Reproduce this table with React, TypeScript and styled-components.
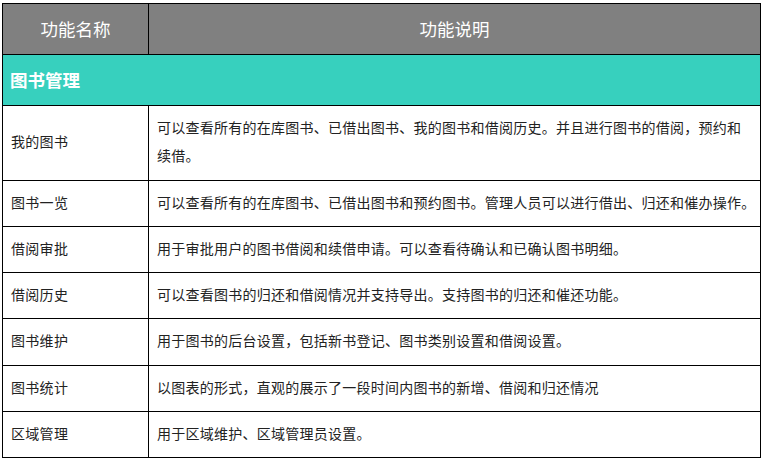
import React from "react";
import styled, { createGlobalStyle } from "styled-components";

const Global = createGlobalStyle`
  html, body { margin: 0; padding: 0; background: #ffffff; }
  body { font-family: "Noto Sans CJK SC", "Noto Sans", sans-serif; }
`;

const Page = styled.div`
  padding: 3px 0 0 2px;
`;

const Table = styled.table`
  width: 759px;
  border-collapse: collapse;
  table-layout: fixed;
  border: 1px solid #000;
`;

const HeadRow = styled.tr`
  height: 51px;
  background: #808080;
`;

const HeadCell = styled.th`
  border: 1px solid #000;
  color: #ffffff;
  font-weight: 400;
  font-size: 17.5px;
  text-align: center;
  vertical-align: middle;
  padding: 0 0 2px 0;
`;

const SectionRow = styled.tr`
  height: 51px;
  background: #37d0be;
`;

const SectionCell = styled.td`
  border: 1px solid #000;
  color: #ffffff;
  font-weight: 700;
  font-size: 17.5px;
  padding: 0 0 2px 7px;
  vertical-align: middle;
`;

const BodyRow = styled.tr<{ $h: number }>`
  height: ${(p) => p.$h}px;
`;

const NameCell = styled.td`
  border: 1px solid #000;
  color: #222;
  font-size: 14px;
  letter-spacing: 0.3px;
  padding: 0 0 4px 8px;
  vertical-align: middle;
`;

const DescCell = styled.td`
  border: 1px solid #000;
  color: #222;
  font-size: 14px;
  letter-spacing: 0.25px;
  line-height: 28px;
  padding: 6px 1px 10px 8px;
  vertical-align: middle;
`;

const Keep = styled.span`
  white-space: nowrap;
`;

const rows = [
  { name: "我的图书", desc: "可以查看所有的在库图书、已借出图书、我的图书和借阅历史。并且进行图书的借阅，预约和", tail: "续借。", h: 75 },
  { name: "图书一览", desc: "可以查看所有的在库图书、已借出图书和预约图书。管理人员可以进行借出、归还和催办操作。", tail: "", h: 46 },
  { name: "借阅审批", desc: "用于审批用户的图书借阅和续借申请。可以查看待确认和已确认图书明细。", tail: "", h: 46 },
  { name: "借阅历史", desc: "可以查看图书的归还和借阅情况并支持导出。支持图书的归还和催还功能。", tail: "", h: 46 },
  { name: "图书维护", desc: "用于图书的后台设置，包括新书登记、图书类别设置和借阅设置。", tail: "", h: 47 },
  { name: "图书统计", desc: "以图表的形式，直观的展示了一段时间内图书的新增、借阅和归还情况", tail: "", h: 46 },
  { name: "区域管理", desc: "用于区域维护、区域管理员设置。", tail: "", h: 46 },
];

export default function App() {
  return (
    <Page>
      <Global />
      <Table>
        <colgroup>
          <col style={{ width: 146 }} />
          <col />
        </colgroup>
        <thead>
          <HeadRow>
            <HeadCell>功能名称</HeadCell>
            <HeadCell>功能说明</HeadCell>
          </HeadRow>
        </thead>
        <tbody>
          <SectionRow>
            <SectionCell colSpan={2}>图书管理</SectionCell>
          </SectionRow>
          {rows.map((r) => (
            <BodyRow key={r.name} $h={r.h}>
              <NameCell>{r.name}</NameCell>
              <DescCell>
                {r.desc}
                {r.tail && <Keep>{r.tail}</Keep>}
              </DescCell>
            </BodyRow>
          ))}
        </tbody>
      </Table>
    </Page>
  );
}
